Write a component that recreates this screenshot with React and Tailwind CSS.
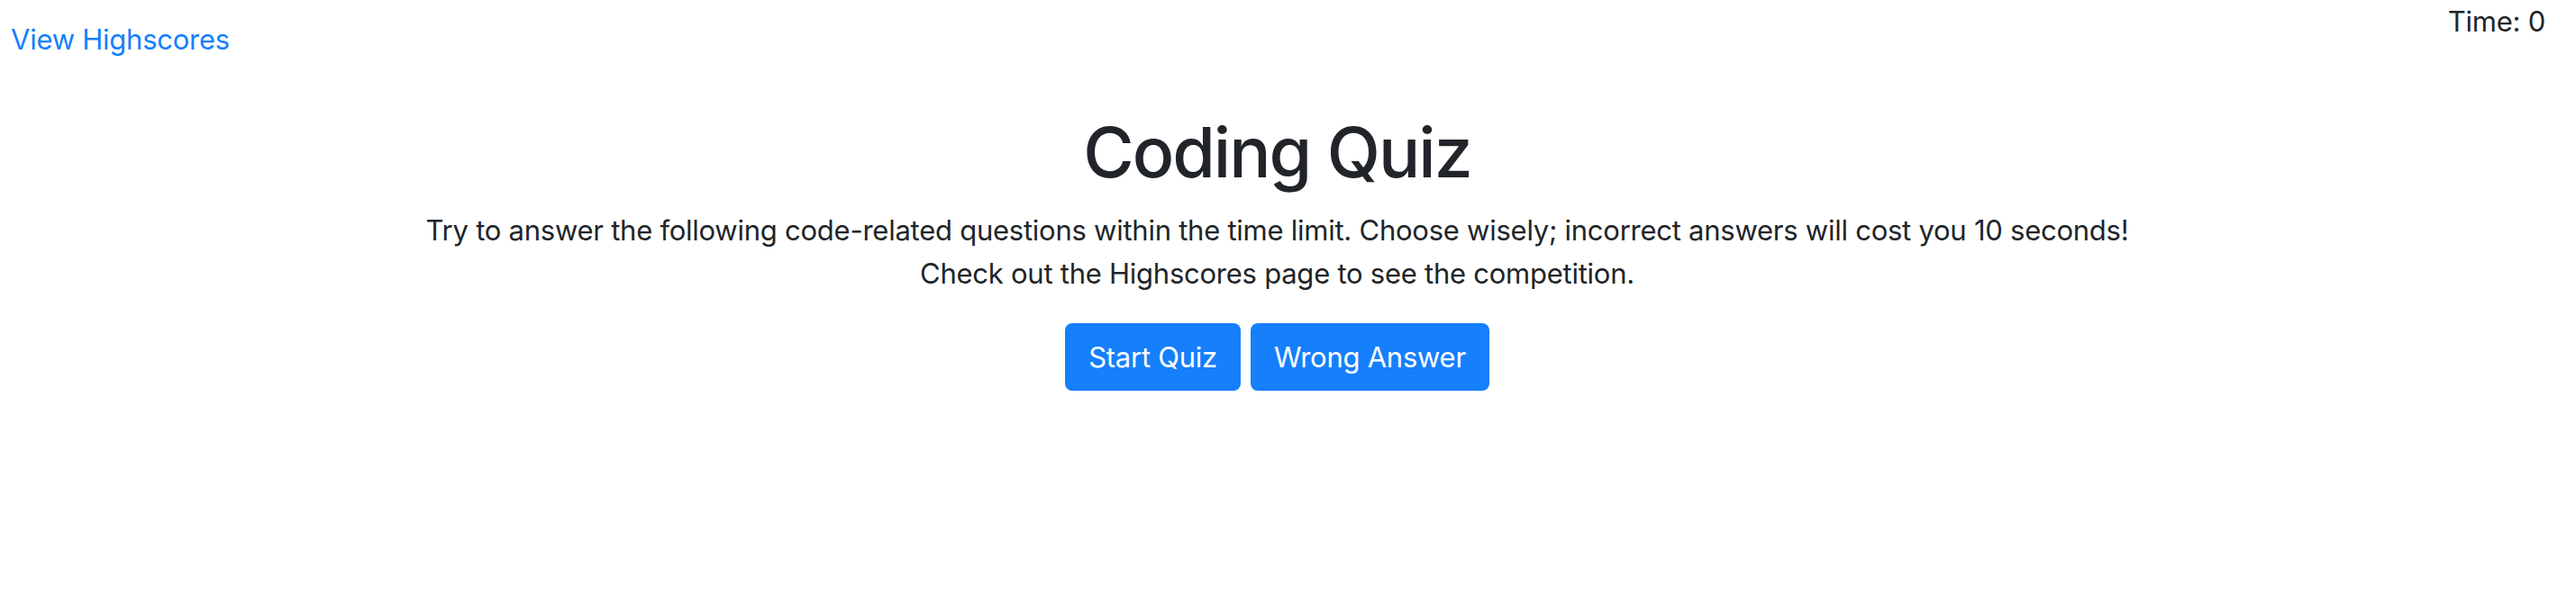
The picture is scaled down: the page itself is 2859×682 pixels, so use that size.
import React, { useState } from 'react'

export default function App() {
  const [time] = useState(0)

  return (
    <div className="min-h-[682px] w-full bg-white text-[#212529] font-['Inter','Liberation_Sans',sans-serif] text-[31px] leading-[48px] tracking-[-0.25px]">
      <div className="w-[2835px]">
        <header className="flex items-start justify-between pl-[12px] pr-[10px]">
          <a href="#" className="mt-[20px] text-[#167ffc] no-underline">
            View Highscores
          </a>
          <div>Time: {time}</div>
        </header>

        <main className="flex flex-col items-center text-center">
          <h1 className="mt-[53px] mb-[15px] text-[77px] leading-[96px] font-medium tracking-[-2px]">Coding Quiz</h1>
          <p>
            Try to answer the following code-related questions within the time limit. Choose wisely; incorrect answers will cost you 10 seconds!
            <br />
            Check out the Highscores page to see the competition.
          </p>
          <div className="mt-[31px] flex gap-[11px]">
            <button className="h-[75px] rounded-[8px] bg-[#167ffc] px-[26px] text-white">Start Quiz</button>
            <button className="h-[75px] rounded-[8px] bg-[#167ffc] px-[26px] text-white">Wrong Answer</button>
          </div>
        </main>
      </div>
    </div>
  )
}
